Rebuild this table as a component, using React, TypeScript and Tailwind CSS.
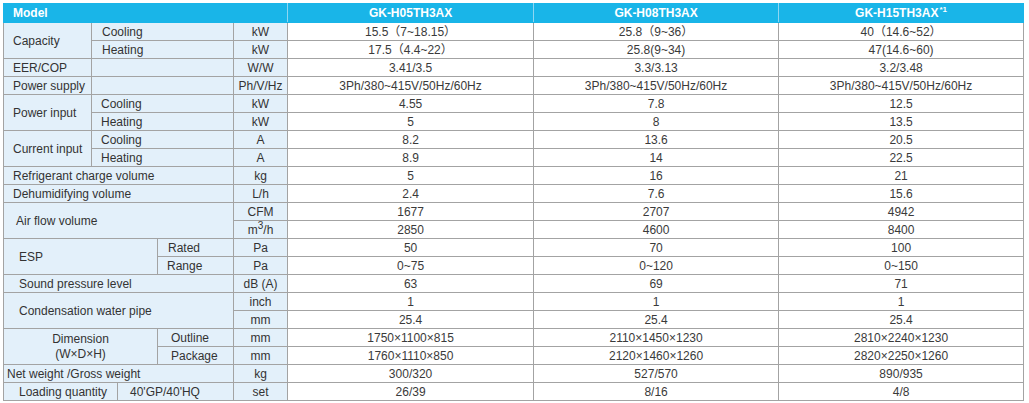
import React from "react"

type Row = {
  cells: React.ReactNode
  unit: React.ReactNode
  values: [string, string, string]
}

const lbl = "bg-[#e3f0fa] border border-[#a3a3a3] text-[#333] text-left align-middle p-0"
const unitCls = "bg-[#e3f0fa] border border-[#a3a3a3] text-[#333] text-center align-middle p-0"
const valCls = "border border-[#a3a3a3] text-[#3a3a3a] text-center align-middle p-0"

const m3 = (
  <span>
    m<sup className="text-[10px] relative -top-[5px]">3</sup>/h
  </span>
)

const rows: Row[] = [
  {
    cells: (
      <>
        <td rowSpan={2} className={`${lbl} pl-[9px]`}>Capacity</td>
        <td colSpan={3} className={`${lbl} pl-[10px]`}>Cooling</td>
      </>
    ),
    unit: "kW",
    values: ["15.5（7~18.15）", "25.8（9~36）", "40（14.6~52）"],
  },
  {
    cells: <td colSpan={3} className={`${lbl} pl-[10px]`}>Heating</td>,
    unit: "kW",
    values: ["17.5（4.4~22）", "25.8(9~34)", "47(14.6~60)"],
  },
  {
    cells: (
      <>
        <td className={`${lbl} pl-[9px]`}>EER/COP</td>
        <td colSpan={3} className={lbl}></td>
      </>
    ),
    unit: "W/W",
    values: ["3.41/3.5", "3.3/3.13", "3.2/3.48"],
  },
  {
    cells: (
      <>
        <td className={`${lbl} pl-[9px]`}>Power supply</td>
        <td colSpan={3} className={lbl}></td>
      </>
    ),
    unit: "Ph/V/Hz",
    values: ["3Ph/380~415V/50Hz/60Hz", "3Ph/380~415V/50Hz/60Hz", "3Ph/380~415V/50Hz/60Hz"],
  },
  {
    cells: (
      <>
        <td rowSpan={2} className={`${lbl} pl-[9px]`}>Power input</td>
        <td colSpan={3} className={`${lbl} pl-[9px]`}>Cooling</td>
      </>
    ),
    unit: "kW",
    values: ["4.55", "7.8", "12.5"],
  },
  {
    cells: <td colSpan={3} className={`${lbl} pl-[9px]`}>Heating</td>,
    unit: "kW",
    values: ["5", "8", "13.5"],
  },
  {
    cells: (
      <>
        <td rowSpan={2} className={`${lbl} pl-[9px]`}>Current input</td>
        <td colSpan={3} className={`${lbl} pl-[9px]`}>Cooling</td>
      </>
    ),
    unit: "A",
    values: ["8.2", "13.6", "20.5"],
  },
  {
    cells: <td colSpan={3} className={`${lbl} pl-[9px]`}>Heating</td>,
    unit: "A",
    values: ["8.9", "14", "22.5"],
  },
  {
    cells: <td colSpan={4} className={`${lbl} pl-[9px]`}>Refrigerant charge volume</td>,
    unit: "kg",
    values: ["5", "16", "21"],
  },
  {
    cells: <td colSpan={4} className={`${lbl} pl-[9px]`}>Dehumidifying volume</td>,
    unit: "L/h",
    values: ["2.4", "7.6", "15.6"],
  },
  {
    cells: <td colSpan={4} rowSpan={2} className={`${lbl} pl-[12px]`}>Air flow volume</td>,
    unit: "CFM",
    values: ["1677", "2707", "4942"],
  },
  {
    cells: null,
    unit: m3,
    values: ["2850", "4600", "8400"],
  },
  {
    cells: (
      <>
        <td colSpan={3} rowSpan={2} className={`${lbl} pl-[15px]`}>ESP</td>
        <td className={`${lbl} pl-[10px]`}>Rated</td>
      </>
    ),
    unit: "Pa",
    values: ["50", "70", "100"],
  },
  {
    cells: <td className={`${lbl} pl-[9px]`}>Range</td>,
    unit: "Pa",
    values: ["0~75", "0~120", "0~150"],
  },
  {
    cells: <td colSpan={4} className={`${lbl} pl-[15px]`}>Sound pressure level</td>,
    unit: "dB (A)",
    values: ["63", "69", "71"],
  },
  {
    cells: <td colSpan={4} rowSpan={2} className={`${lbl} pl-[15px]`}>Condensation water pipe</td>,
    unit: "inch",
    values: ["1", "1", "1"],
  },
  {
    cells: null,
    unit: "mm",
    values: ["25.4", "25.4", "25.4"],
  },
  {
    cells: (
      <>
        <td colSpan={3} rowSpan={2} className={`${lbl} !text-center leading-[15px]`}>
          Dimension
          <br />
          (W×D×H)
        </td>
        <td className={`${lbl} pl-[13px]`}>Outline</td>
      </>
    ),
    unit: "mm",
    values: ["1750×1100×815", "2110×1450×1230", "2810×2240×1230"],
  },
  {
    cells: <td className={`${lbl} pl-[13px]`}>Package</td>,
    unit: "mm",
    values: ["1760×1110×850", "2120×1460×1260", "2820×2250×1260"],
  },
  {
    cells: <td colSpan={4} className={`${lbl} pl-[3px]`}>Net weight /Gross weight</td>,
    unit: "kg",
    values: ["300/320", "527/570", "890/935"],
  },
  {
    cells: (
      <>
        <td colSpan={2} className={`${lbl} pl-[15px]`}>Loading quantity</td>
        <td colSpan={2} className={`${lbl} pl-[12px]`}>40'GP/40'HQ</td>
      </>
    ),
    unit: "set",
    values: ["26/39", "8/16", "4/8"],
  },
]

export default function App() {
  return (
    <div className="w-[1029px] h-[403px] bg-white pt-[3px] pl-[3px] font-['Liberation_Sans',Arial,'Noto_Sans_CJK_SC',sans-serif] text-[12px] leading-[16px]">
      <table className="table-fixed border-collapse w-[1020px]">
        <colgroup>
          <col className="w-[88px]" />
          <col className="w-[26px]" />
          <col className="w-[40px]" />
          <col className="w-[76px]" />
          <col className="w-[54px]" />
          <col className="w-[246px]" />
          <col className="w-[245px]" />
          <col className="w-[245px]" />
        </colgroup>
        <thead>
          <tr className="h-[19px] bg-[#19b5e8] text-white font-bold">
            <th colSpan={5} className="text-left pl-[9px] p-0 border border-[#19b5e8] border-r-[#8fd6f2]">
              Model
            </th>
            <th className="p-0 border border-[#19b5e8] border-r-[#8fd6f2]">GK-H05TH3AX</th>
            <th className="p-0 border border-[#19b5e8] border-r-[#8fd6f2]">GK-H08TH3AX</th>
            <th className="p-0 border border-[#19b5e8]">
              GK-H15TH3AX<sup className="text-[8px] relative -top-[5px] ml-[1px]">*1</sup>
            </th>
          </tr>
        </thead>
        <tbody>
          {rows.map((r, i) => (
            <tr key={i} className="h-[18px]">
              {r.cells}
              <td className={unitCls}>{r.unit}</td>
              {r.values.map((v, j) => (
                <td key={j} className={valCls}>
                  {v}
                </td>
              ))}
            </tr>
          ))}
        </tbody>
      </table>
    </div>
  )
}
